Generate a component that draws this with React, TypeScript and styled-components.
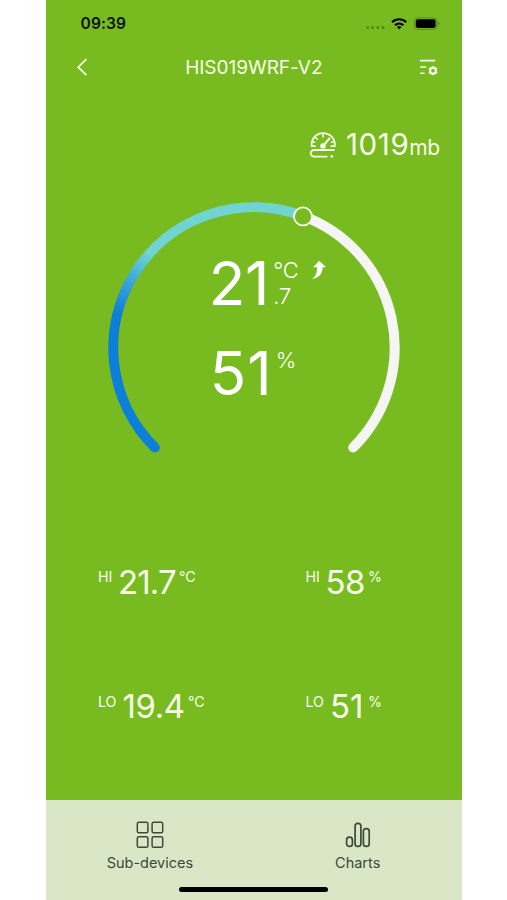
import React from "react";
import styled, { createGlobalStyle } from "styled-components";

const GlobalStyle = createGlobalStyle`
  * { box-sizing: border-box; }
  body { margin: 0; background: #fff; font-family: Inter, "Liberation Sans", sans-serif; }
`;

const Page = styled.div`
  display: flex;
  height: 900px;
  padding-left: 46px;
  background: #fff;
`;

const Phone = styled.main`
  display: flex;
  flex-direction: column;
  width: 415.6px;
  height: 900px;
  background: #78bb21;
  color: #fff;
`;

const StatusBar = styled.div`
  display: flex;
  align-items: center;
  justify-content: space-between;
  height: 48px;
  padding: 0 22px 0 34.5px;
  color: #0c1404;
`;

const Clock = styled.span`
  font-size: 15.6px;
  font-weight: 600;
  line-height: 48px;
  letter-spacing: 0.1px;
`;

const Header = styled.header`
  display: grid;
  grid-template-columns: 72px 1fr 72px;
  align-items: center;
  height: 39px;
  color: #f7ffe9;
`;

const Title = styled.h1`
  margin: 0;
  font-size: 19px;
  font-weight: 400;
  line-height: 39px;
  text-align: center;
  letter-spacing: -0.02px;
  white-space: nowrap;
`;

const HeaderAction = styled.div<{ $end?: boolean }>`
  display: flex;
  justify-content: ${(p) => (p.$end ? "flex-end" : "flex-start")};
  padding: ${(p) => (p.$end ? "0 23.5px 1px 0" : "0 0 1px 29px")};
`;

const Pressure = styled.div`
  display: flex;
  align-items: center;
  height: 40px;
  margin-top: 38px;
  padding-left: 263px;
  color: #f7ffe9;
`;

const PressureValue = styled.div`
  margin-left: 9px;
  padding-top: 2px;
  font-size: 29.5px;
  line-height: 40px;
  letter-spacing: 0.6px;
  white-space: nowrap;
`;

const PressureUnit = styled.span`
  font-size: 21px;
  letter-spacing: -0.4px;
`;

const Gauge = styled.section`
  display: grid;
  grid-template-columns: 292px;
  justify-content: center;
  height: 260px;
  margin-top: 32px;
  & > * { grid-area: 1 / 1; }
`;

const Readings = styled.div`
  display: flex;
  flex-direction: column;
  gap: 30px;
  padding-top: 56px;
`;

const Reading = styled.div<{ $indent: number }>`
  display: flex;
  height: 60px;
  padding-left: ${(p) => p.$indent}px;
`;

const BigNumber = styled.span<{ $width: number; $spacing: number }>`
  width: ${(p) => p.$width}px;
  font-size: 60px;
  font-weight: 400;
  line-height: 60px;
  letter-spacing: ${(p) => p.$spacing}px;
  white-space: nowrap;
`;

const UnitColumn = styled.div`
  display: flex;
  flex-direction: column;
  padding-top: 4px;
  font-size: 22px;
  font-weight: 350;
  line-height: 26px;
  letter-spacing: -0.3px;
`;

const TrendSlot = styled.div`
  margin: 7px 0 0 13px;
`;

const Extremes = styled.section`
  display: grid;
  grid-template-columns: 207.5px 1fr;
  grid-template-rows: 124.5px 124.5px;
  margin-top: 62.5px;
  padding-left: 52px;
`;

const Extreme = styled.div`
  display: flex;
  align-items: center;
  height: 124.5px;
  color: #f7ffe9;
`;

const SmallText = styled.span<{ $width?: number; $size: number }>`
  width: ${(p) => (p.$width ? `${p.$width}px` : "auto")};
  margin-top: -9px;
  font-size: ${(p) => p.$size}px;
  font-weight: 400;
  line-height: 20px;
  letter-spacing: -0.1px;
  white-space: nowrap;
`;

const ExtremeValue = styled.span<{ $width: number; $spacing: number }>`
  width: ${(p) => p.$width}px;
  font-size: 33px;
  line-height: 40px;
  letter-spacing: ${(p) => p.$spacing}px;
  white-space: nowrap;
`;

const TabBar = styled.nav`
  display: grid;
  grid-template-columns: 1fr 1fr;
  grid-template-rows: 75px 1fr;
  flex: none;
  height: 100.5px;
  margin-top: auto;
  background: #d9e7c7;
  color: #3c4a38;
`;

const Tab = styled.div`
  display: flex;
  flex-direction: column;
  align-items: center;
  padding-top: 21px;
  font-size: 14.5px;
  line-height: 20px;
  gap: 4px;
`;

const HomeIndicator = styled.div`
  grid-column: 1 / -1;
  justify-self: center;
  width: 149px;
  height: 5px;
  margin-top: 12.5px;
  border-radius: 3px;
  background: #000;
`;

const StatusIcons = () => (
  <svg width="76" height="18" viewBox="0 0 76 18">
    <g fill="#568a18">
      <circle cx="3.6" cy="12.6" r="1.5" />
      <circle cx="8.6" cy="12.6" r="1.5" />
      <circle cx="13.8" cy="12.6" r="1.5" />
      <circle cx="19" cy="12.6" r="1.5" />
    </g>
    <g fill="none" stroke="#000" strokeWidth="2.2">
      <path d="M28.1 7.1a10.3 10.3 0 0 1 14.2 0" />
      <path d="M31 10.3a6.2 6.2 0 0 1 8.4 0" />
    </g>
    <path d="M32.9 11.9a3.5 3.5 0 0 1 4.6 0l-2.3 2.5z" fill="#000" />
    <rect x="50.4" y="2.9" width="22.6" height="11.4" rx="3.3" fill="none" stroke="#568a18" strokeWidth="1" />
    <rect x="51.8" y="4.3" width="19.8" height="8.6" rx="1.8" fill="#000" />
    <path d="M74 6.8q1.4.6 1.4 1.8t-1.4 1.8z" fill="#568a18" />
  </svg>
);

const BackIcon = () => (
  <svg width="15" height="20" viewBox="0 0 15 20" fill="none" stroke="currentColor" strokeWidth="1.8">
    <path d="M11.4 2.1 3.2 10.2l8.2 8" />
  </svg>
);

const SettingsIcon = () => (
  <svg width="20" height="20" viewBox="0 0 20 20" fill="none" stroke="currentColor" strokeWidth="1.6" strokeLinecap="round">
    <path d="M2.7 3.6h14M2.7 10h4.8M2.7 16.3h3.3" />
    <circle cx="15" cy="13.7" r="3" strokeWidth="2.2" />
    <path d="M15 9.6v.4M15 17.4v.4M11.3 11.6l.4.2M18.3 15.6l.4.2M11.3 15.8l.4-.2M18.3 11.8l.4-.2" strokeWidth="1.3" />
  </svg>
);

const PressureIcon = () => (
  <svg width="28" height="28" viewBox="0 0 28 28" fill="none" stroke="currentColor" strokeWidth="1.8" strokeLinecap="round">
    <path d="M2.7 15.2C2 8 7 2.1 14.1 2.1S26.5 8 25.8 15.2M2.7 15.2h3.2M22.3 15.2h3.5" />
    <path d="M14.1 3v3M6.3 6.2l2 2.1M4.1 10.7l1.4.5M24 10.7l-1.4.5" strokeWidth="1.5" />
    <path d="m14.4 14.5 6-7" strokeWidth="2" />
    <circle cx="14" cy="15" r="2.8" fill="currentColor" stroke="none" />
    <path d="M8.8 19H5a3.2 3.2 0 0 0 0 6.6h12.7M8.8 19h16" />
    <circle cx="22.8" cy="25.4" r="1.3" fill="currentColor" stroke="none" />
  </svg>
);

const GaugeArc = () => (
  <svg width="292" height="260" viewBox="108 197 292 260" fill="none" strokeWidth="10">
    <defs>
      <linearGradient id="arc" gradientUnits="userSpaceOnUse" x1="118" y1="314" x2="148" y2="252">
        <stop offset="0" stopColor="#0c80d9" />
        <stop offset="0.5" stopColor="#3ca5d8" />
        <stop offset="1" stopColor="#70d5d2" />
      </linearGradient>
    </defs>
    <path d="M154.8 447.5A140.6 140.6 0 0 1 303 216" stroke="url(#arc)" strokeLinecap="round" />
    <path d="M303 216A140.6 140.6 0 0 1 353.2 447.5" stroke="#f5f5f3" strokeLinecap="round" />
    <circle cx="303" cy="216.4" r="9" fill="#78bb21" stroke="#f7ffe9" strokeWidth="1.8" />
  </svg>
);

const TrendArrow = () => (
  <svg width="16" height="20" viewBox="0 0 16 20" fill="currentColor">
    <path d="M8.2.8 15 7.2h-3.4c-.1 6.4-3.4 11.1-10.8 11.5 4-2.1 5.3-5.9 5.2-11.5H2.2z" />
  </svg>
);

const DevicesIcon = () => (
  <svg width="28" height="28" viewBox="0 0 28 28" fill="none" stroke="currentColor" strokeWidth="1.5">
    <rect x="1.3" y="1.2" width="10.6" height="10.6" rx="1.6" />
    <rect x="16.1" y="1.2" width="10.6" height="10.6" rx="1.6" />
    <rect x="1.3" y="15.7" width="10.6" height="10.6" rx="1.6" />
    <rect x="16.1" y="15.7" width="10.6" height="10.6" rx="1.6" />
  </svg>
);

const ChartsIcon = () => (
  <svg width="28" height="28" viewBox="0 0 28 28" fill="none" stroke="currentColor" strokeWidth="1.7">
    <rect x="2.6" y="16.2" width="5.8" height="9.2" rx="2.7" />
    <rect x="11.1" y="2.4" width="5.8" height="23" rx="2.7" />
    <rect x="19.4" y="7.6" width="5.8" height="17.8" rx="2.7" />
  </svg>
);

const extremes = [
  { label: "HI", value: "21.7", unit: "°C", labelWidth: 20, valueWidth: 61, spacing: -0.9 },
  { label: "HI", value: "58", unit: "%", labelWidth: 20, valueWidth: 42.5, spacing: -0.6 },
  { label: "LO", value: "19.4", unit: "°C", labelWidth: 24.5, valueWidth: 65.5, spacing: -0.4 },
  { label: "LO", value: "51", unit: "%", labelWidth: 24.5, valueWidth: 38, spacing: 0 },
];

export default function App() {
  return (
    <Page>
      <GlobalStyle />
      <Phone>
        <StatusBar>
          <Clock>09:39</Clock>
          <StatusIcons />
        </StatusBar>
        <Header>
          <HeaderAction><BackIcon /></HeaderAction>
          <Title>HIS019WRF-V2</Title>
          <HeaderAction $end><SettingsIcon /></HeaderAction>
        </Header>
        <Pressure>
          <PressureIcon />
          <PressureValue>1019<PressureUnit>mb</PressureUnit></PressureValue>
        </Pressure>
        <Gauge>
          <GaugeArc />
          <Readings>
            <Reading $indent={101}>
              <BigNumber $width={64.5} $spacing={-0.5}>21</BigNumber>
              <UnitColumn><span>°C</span><span>.7</span></UnitColumn>
              <TrendSlot><TrendArrow /></TrendSlot>
            </Reading>
            <Reading $indent={102}>
              <BigNumber $width={66} $spacing={1}>51</BigNumber>
              <UnitColumn><span>%</span></UnitColumn>
            </Reading>
          </Readings>
        </Gauge>
        <Extremes>
          {extremes.map((item) => (
            <Extreme key={item.label + item.value}>
              <SmallText $size={14.2} $width={item.labelWidth}>{item.label}</SmallText>
              <ExtremeValue $width={item.valueWidth} $spacing={item.spacing}>{item.value}</ExtremeValue>
              <SmallText $size={14.2}>{item.unit}</SmallText>
            </Extreme>
          ))}
        </Extremes>
        <TabBar>
          <Tab><DevicesIcon />Sub-devices</Tab>
          <Tab><ChartsIcon />Charts</Tab>
          <HomeIndicator />
        </TabBar>
      </Phone>
    </Page>
  );
}
